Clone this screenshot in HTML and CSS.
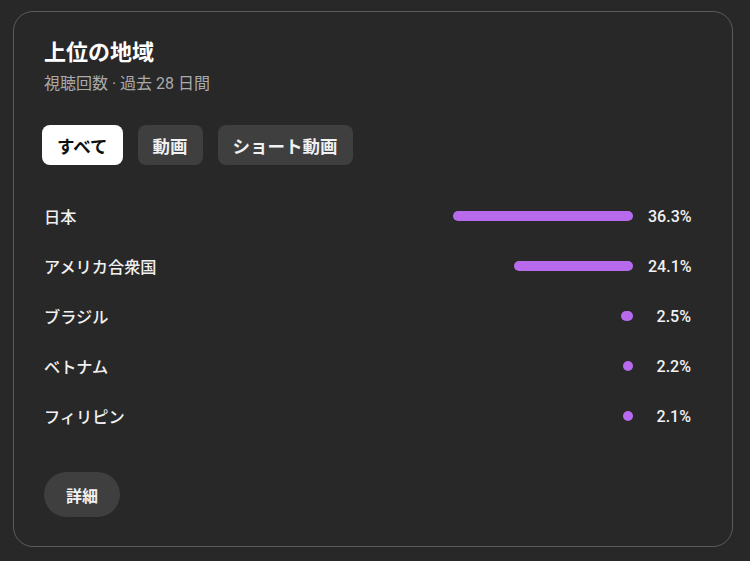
FILE: index.html
```html
<!DOCTYPE html>
<html lang="ja">
<head>
<meta charset="utf-8">
<link rel="stylesheet" href="styles.css">
</head>
<body>
<div class="card">
  <h1 class="title">上位の地域</h1>
  <div class="subtitle">視聴回数 · 過去 28 日間</div>
  <div class="chips">
    <button class="chip chip-active">すべて</button>
    <button class="chip">動画</button>
    <button class="chip">ショート動画</button>
  </div>
  <div class="rows">
    <div class="row"><span class="label">日本</span><span class="bar-wrap"><span class="bar" style="width:180px"></span></span><span class="pct">36.3%</span></div>
    <div class="row"><span class="label">アメリカ合衆国</span><span class="bar-wrap"><span class="bar" style="width:119px"></span></span><span class="pct">24.1%</span></div>
    <div class="row"><span class="label">ブラジル</span><span class="bar-wrap"><span class="bar" style="width:12px"></span></span><span class="pct">2.5%</span></div>
    <div class="row"><span class="label">ベトナム</span><span class="bar-wrap"><span class="bar" style="width:10px"></span></span><span class="pct">2.2%</span></div>
    <div class="row"><span class="label">フィリピン</span><span class="bar-wrap"><span class="bar" style="width:10px"></span></span><span class="pct">2.1%</span></div>
  </div>
  <button class="more">詳細</button>
</div>
</body>
</html>
```

FILE: styles.css
```css
html, body {
  margin: 0;
  background: #282828;
}
body {
  padding: 11px 17px 14px 13px;
  font-family: "Roboto", "Noto Sans CJK JP", sans-serif;
  color: #f1f1f1;
}
.card {
  box-sizing: border-box;
  width: 720px;
  height: 536px;
  border: 1px solid #5c5c5c;
  border-radius: 20px;
  padding: 26px 41px 0 30px;
  background: #282828;
}
.title {
  margin: 0;
  font-size: 22px;
  line-height: 30px;
  font-weight: 700;
  color: #ffffff;
}
.subtitle {
  margin-top: 6px;
  font-size: 16px;
  line-height: 20px;
  color: #aaaaaa;
}
.chips {
  display: flex;
  gap: 15px;
  margin-top: 31px;
  margin-left: -2px;
}
.chip {
  height: 40px;
  padding: 0 15px;
  border: none;
  border-radius: 8px;
  background: #3f3f3f;
  color: #f1f1f1;
  font-family: inherit;
  font-size: 17.5px;
  font-weight: 700;
}
.chip-active {
  background: #ffffff;
  color: #0f0f0f;
}
.rows {
  margin-top: 26px;
  display: flex;
  flex-direction: column;
}
.row {
  height: 50px;
  display: flex;
  align-items: center;
  font-size: 16px;
}
.label {
  flex: 1;
  font-size: 16.2px;
  font-weight: 500;
  color: #f1f1f1;
}
.bar-wrap {
  display: flex;
  justify-content: flex-end;
  width: 300px;
}
.bar {
  display: block;
  height: 10px;
  border-radius: 5px;
  background: #b86aec;
}
.pct {
  width: 43px;
  margin-left: 15px;
  text-align: right;
  font-weight: 500;
  color: #f1f1f1;
}
.more {
  margin-top: 31px;
  height: 45px;
  padding: 0 22px;
  border: none;
  border-radius: 23px;
  background: #3f3f3f;
  color: #f1f1f1;
  font-family: inherit;
  font-size: 16px;
  font-weight: 700;
}
```
